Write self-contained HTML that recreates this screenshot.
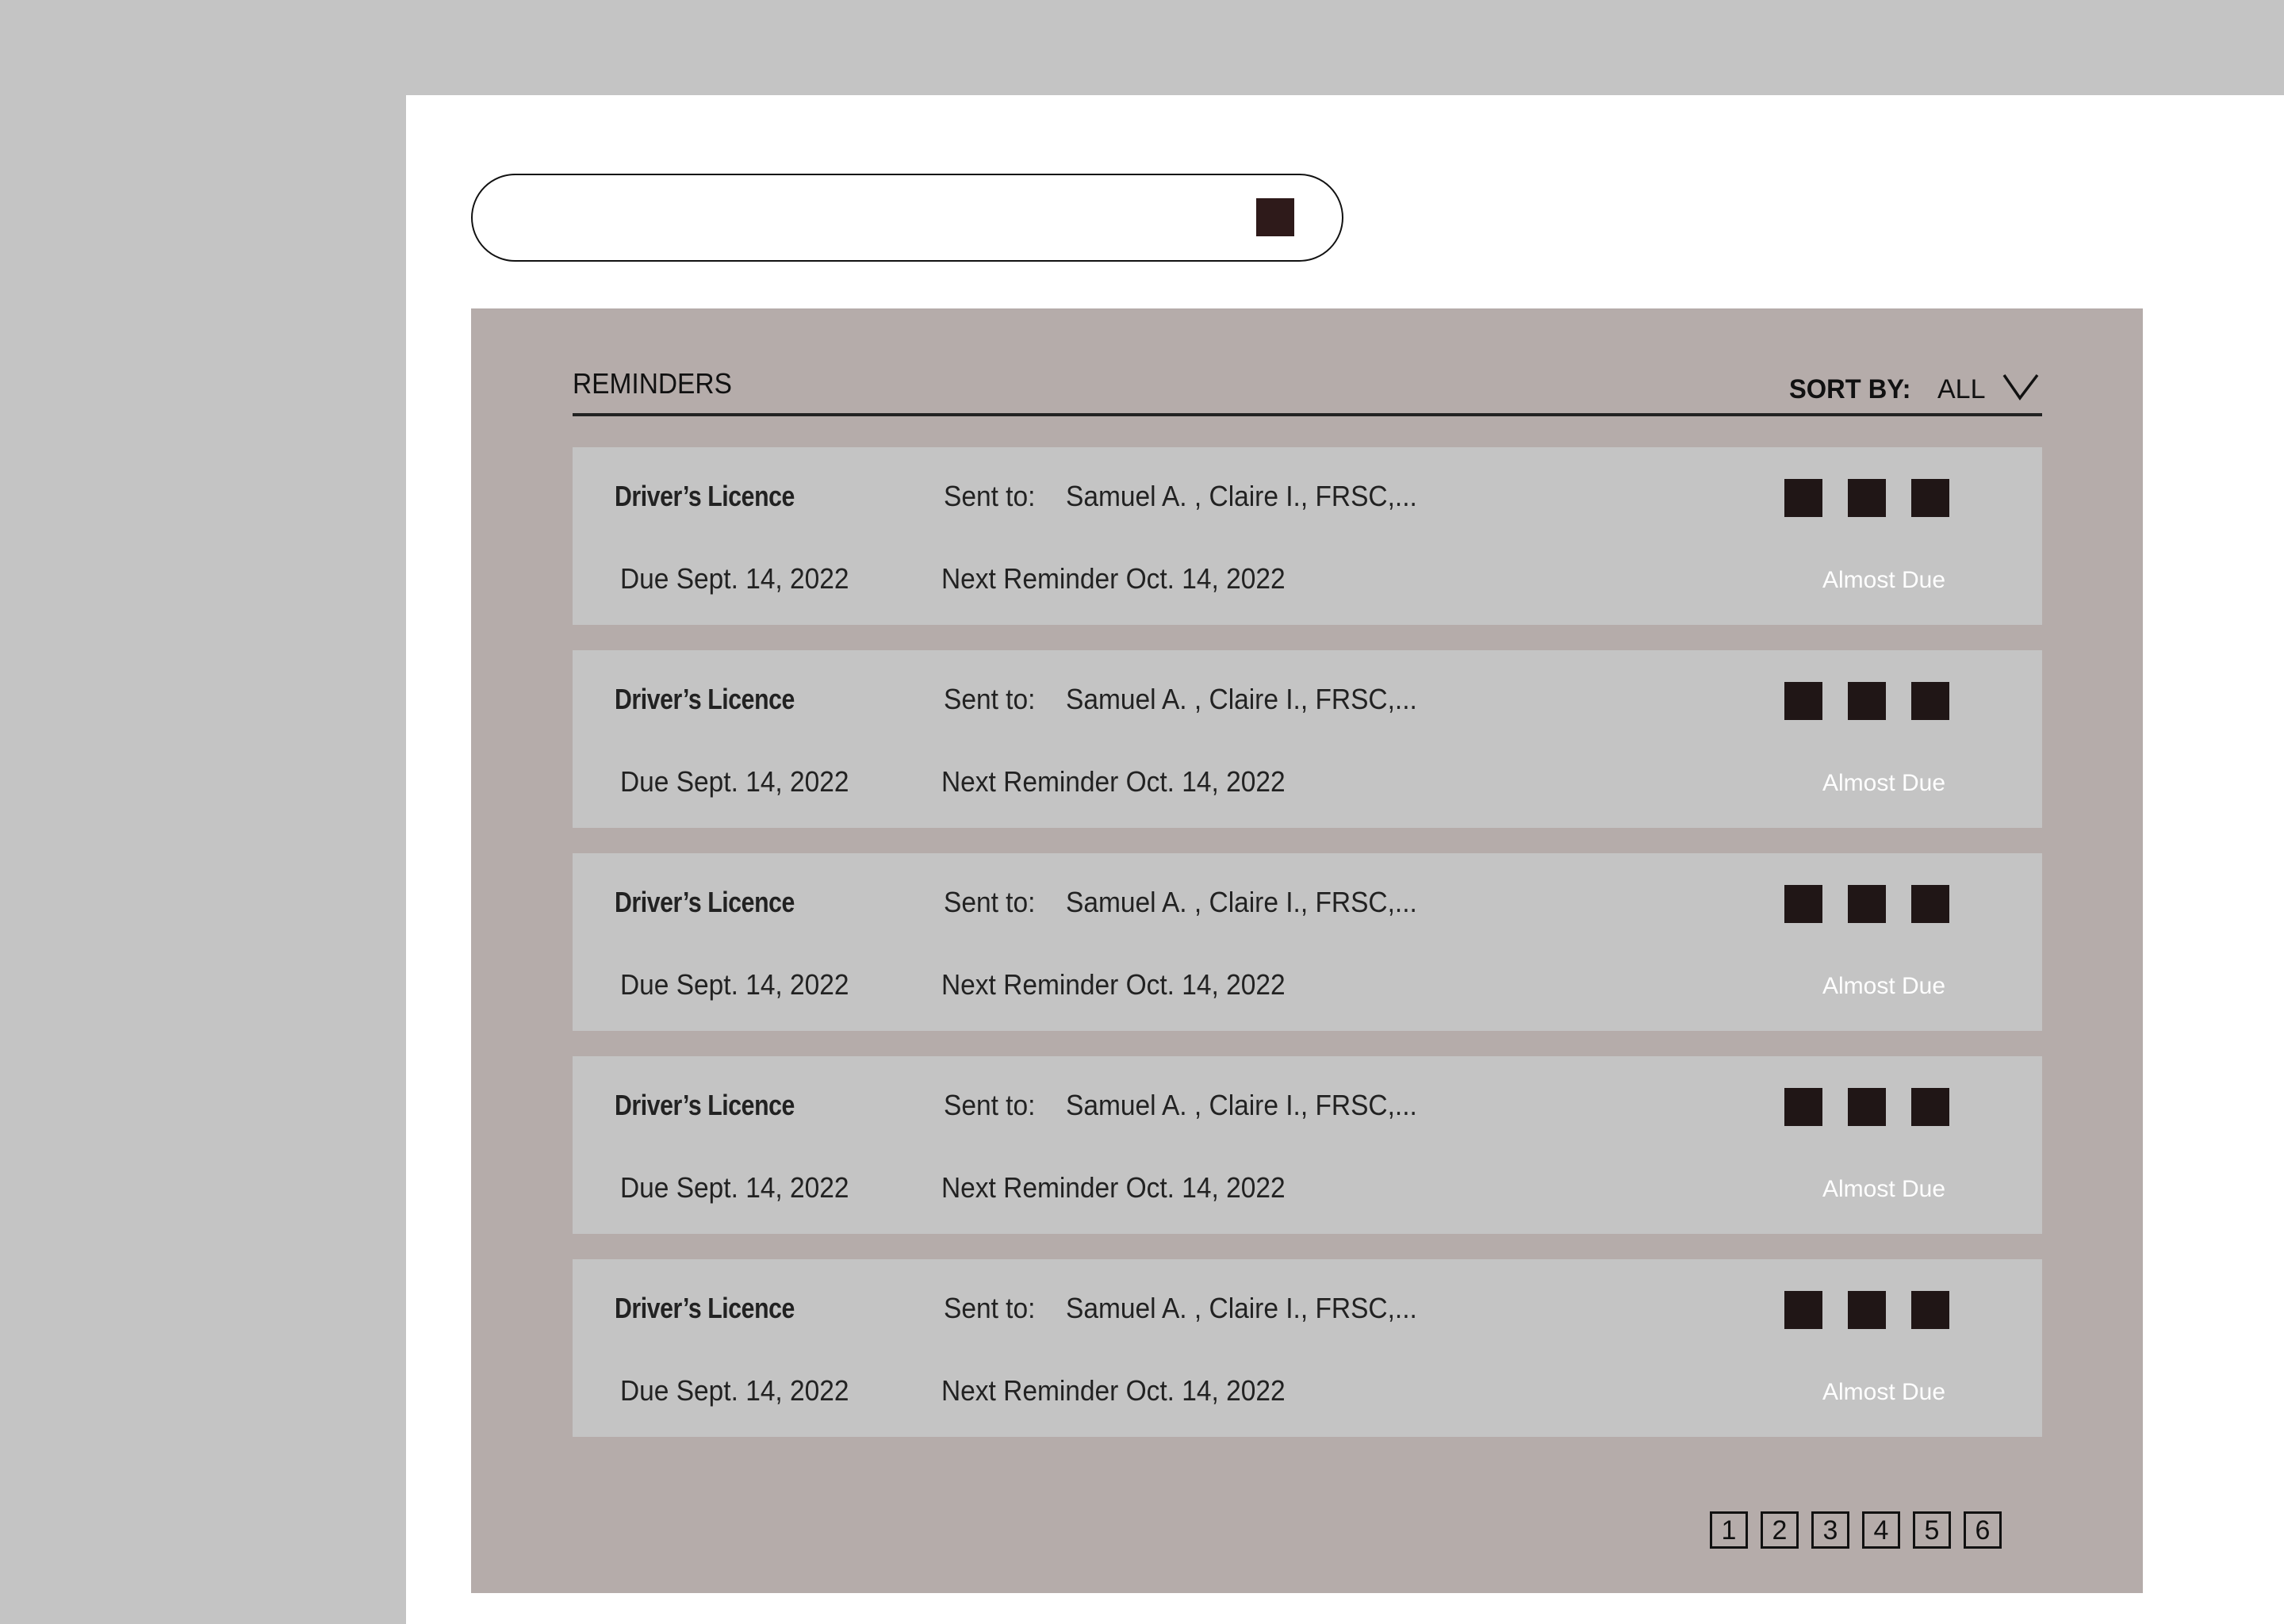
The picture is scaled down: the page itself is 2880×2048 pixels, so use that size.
<!DOCTYPE html>
<html><head><meta charset="utf-8"><style>
*{margin:0;padding:0;box-sizing:border-box}
body{width:2880px;height:2048px;background:#c4c4c4;position:relative;overflow:hidden;font-family:"Liberation Sans",sans-serif;color:#222}
.white{position:absolute;left:512px;top:120px;right:0;bottom:0;background:#fff}
.search{position:absolute;left:594px;top:219px;width:1100px;height:111px;border:2px solid #111;border-radius:56px;background:#fff}
.sq{position:absolute;background:#211616}
.panel{position:absolute;left:594px;top:389px;width:2108px;height:1620px;background:#b5acaa}
.t{position:absolute;white-space:nowrap;line-height:1;transform-origin:0 50%}
.line{position:absolute;left:722px;top:521px;width:1853px;height:4px;background:#222}
.card{position:absolute;left:722px;width:1853px;height:224px;background:#c4c4c4}
.card .t{font-size:36px;color:#222;transform:scaleX(0.93)}
.card .b{font-weight:bold;font-size:36px;letter-spacing:-0.5px;transform:scaleX(0.84)}
.ic{position:absolute;top:40px;width:48px;height:48px;background:#201616}
.pg{position:absolute;top:1906px;width:48px;height:47px;border:3px solid #111;font-size:34px;text-align:center;line-height:42px;color:#111}
</style></head><body>
<div class="white"></div>
<div class="search"></div>
<div class="sq" style="left:1584px;top:250px;width:48px;height:48px;background:#2e1a1a"></div>
<div class="panel"></div>
<div class="t" style="left:722px;top:466px;font-size:36px;color:#111;transform:scaleX(0.93)">REMINDERS</div>
<div class="t" style="left:2256px;top:474px;font-size:34px;font-weight:bold;color:#111;transform:scaleX(0.96)">SORT BY:</div>
<div class="t" style="left:2443px;top:474px;font-size:34px;color:#111">ALL</div>
<svg style="position:absolute;left:2525px;top:470px" width="46" height="36"><path d="M2 3 L22 32 L44 3" fill="none" stroke="#111" stroke-width="3.5"/></svg>
<div class="line"></div>

<div class="card" style="top:564px">
<div class="t b" style="left:53px;top:44px">Driver’s Licence</div>
<div class="t" style="left:468px;top:44px">Sent to:</div>
<div class="t" style="left:622px;top:44px">Samuel A. , Claire I., FRSC,...</div>
<div class="t" style="left:60px;top:148px">Due Sept. 14, 2022</div>
<div class="t" style="left:465px;top:148px">Next Reminder Oct. 14, 2022</div>
<div class="ic" style="left:1528px"></div><div class="ic" style="left:1608px"></div><div class="ic" style="left:1688px"></div>
<div class="t" style="left:1576px;top:153px;font-size:30px;color:#fff;transform:none">Almost Due</div>
</div>
<div class="card" style="top:820px">
<div class="t b" style="left:53px;top:44px">Driver’s Licence</div>
<div class="t" style="left:468px;top:44px">Sent to:</div>
<div class="t" style="left:622px;top:44px">Samuel A. , Claire I., FRSC,...</div>
<div class="t" style="left:60px;top:148px">Due Sept. 14, 2022</div>
<div class="t" style="left:465px;top:148px">Next Reminder Oct. 14, 2022</div>
<div class="ic" style="left:1528px"></div><div class="ic" style="left:1608px"></div><div class="ic" style="left:1688px"></div>
<div class="t" style="left:1576px;top:153px;font-size:30px;color:#fff;transform:none">Almost Due</div>
</div>
<div class="card" style="top:1076px">
<div class="t b" style="left:53px;top:44px">Driver’s Licence</div>
<div class="t" style="left:468px;top:44px">Sent to:</div>
<div class="t" style="left:622px;top:44px">Samuel A. , Claire I., FRSC,...</div>
<div class="t" style="left:60px;top:148px">Due Sept. 14, 2022</div>
<div class="t" style="left:465px;top:148px">Next Reminder Oct. 14, 2022</div>
<div class="ic" style="left:1528px"></div><div class="ic" style="left:1608px"></div><div class="ic" style="left:1688px"></div>
<div class="t" style="left:1576px;top:153px;font-size:30px;color:#fff;transform:none">Almost Due</div>
</div>
<div class="card" style="top:1332px">
<div class="t b" style="left:53px;top:44px">Driver’s Licence</div>
<div class="t" style="left:468px;top:44px">Sent to:</div>
<div class="t" style="left:622px;top:44px">Samuel A. , Claire I., FRSC,...</div>
<div class="t" style="left:60px;top:148px">Due Sept. 14, 2022</div>
<div class="t" style="left:465px;top:148px">Next Reminder Oct. 14, 2022</div>
<div class="ic" style="left:1528px"></div><div class="ic" style="left:1608px"></div><div class="ic" style="left:1688px"></div>
<div class="t" style="left:1576px;top:153px;font-size:30px;color:#fff;transform:none">Almost Due</div>
</div>
<div class="card" style="top:1588px">
<div class="t b" style="left:53px;top:44px">Driver’s Licence</div>
<div class="t" style="left:468px;top:44px">Sent to:</div>
<div class="t" style="left:622px;top:44px">Samuel A. , Claire I., FRSC,...</div>
<div class="t" style="left:60px;top:148px">Due Sept. 14, 2022</div>
<div class="t" style="left:465px;top:148px">Next Reminder Oct. 14, 2022</div>
<div class="ic" style="left:1528px"></div><div class="ic" style="left:1608px"></div><div class="ic" style="left:1688px"></div>
<div class="t" style="left:1576px;top:153px;font-size:30px;color:#fff;transform:none">Almost Due</div>
</div>

<div class="pg" style="left:2156px">1</div>
<div class="pg" style="left:2220px">2</div>
<div class="pg" style="left:2284px">3</div>
<div class="pg" style="left:2348px">4</div>
<div class="pg" style="left:2412px">5</div>
<div class="pg" style="left:2476px">6</div>
</body></html>
